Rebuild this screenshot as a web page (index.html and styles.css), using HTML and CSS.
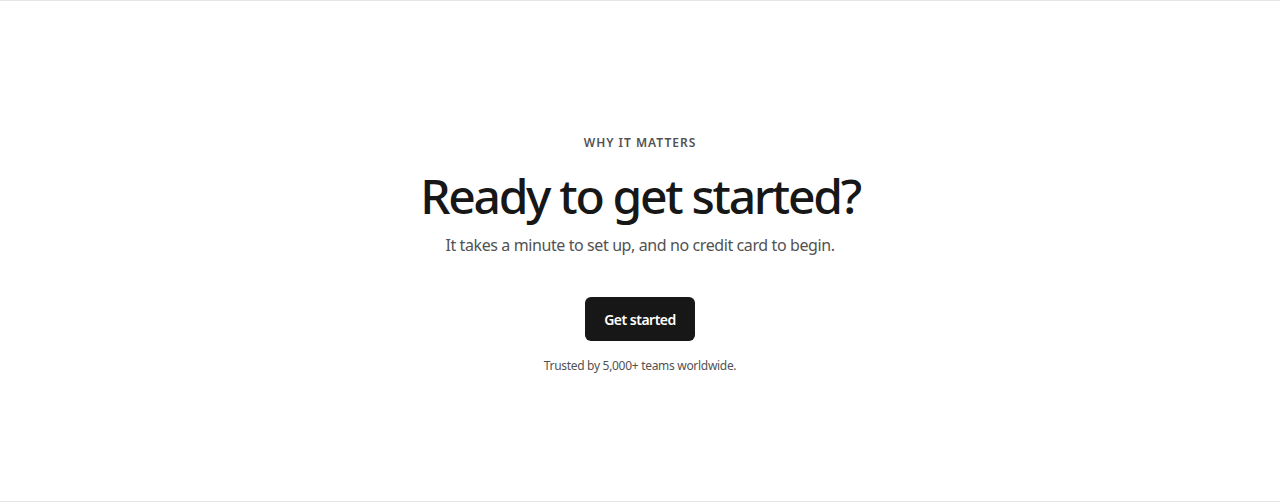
FILE: index.html
```html
<!DOCTYPE html>
<html lang="en">
<head>
<meta charset="utf-8">
<title>Ready to get started?</title>
<link rel="stylesheet" href="styles.css">
</head>
<body>
<section class="cta">
  <p class="eyebrow">WHY IT MATTERS</p>
  <h1 class="title">Ready to get started?</h1>
  <p class="subtitle">It takes a minute to set up, and no credit card to begin.</p>
  <a class="button" href="#">Get started</a>
  <p class="note">Trusted by 5,000+ teams worldwide.</p>
</section>
</body>
</html>
```

FILE: styles.css
```css
html, body {
  margin: 0;
  padding: 0;
  background: #ffffff;
}
body {
  font-family: "Noto Sans", "Open Sans", "DejaVu Sans", sans-serif;
  color: #171717;
}
.cta {
  box-sizing: border-box;
  height: 502px;
  border-top: 1px solid #e5e5e5;
  border-bottom: 1px solid #e5e5e5;
  display: flex;
  flex-direction: column;
  align-items: center;
  padding-top: 134px;
  text-align: center;
}
.eyebrow {
  margin: 0;
  font-size: 12px;
  line-height: 16px;
  font-weight: 600;
  letter-spacing: 1px;
  color: #525252;
}
.title {
  margin: 18px 0 0;
  font-size: 48px;
  line-height: 53px;
  font-weight: 500;
  letter-spacing: -2.3px;
  color: #171717;
}
.subtitle {
  margin: 11px 0 0;
  font-size: 16px;
  line-height: 24px;
  letter-spacing: -0.4px;
  color: #525252;
}
.button {
  margin-top: 40px;
  display: flex;
  align-items: center;
  justify-content: center;
  width: 110px;
  height: 44px;
  box-sizing: border-box;
  border-radius: 6px;
  background: #171717;
  color: #ffffff;
  font-size: 14px;
  font-weight: 600;
  letter-spacing: -0.5px;
  text-decoration: none;
}
.note {
  margin: 17px 0 0;
  font-size: 12px;
  line-height: 16px;
  letter-spacing: -0.3px;
  color: #525252;
}
```
